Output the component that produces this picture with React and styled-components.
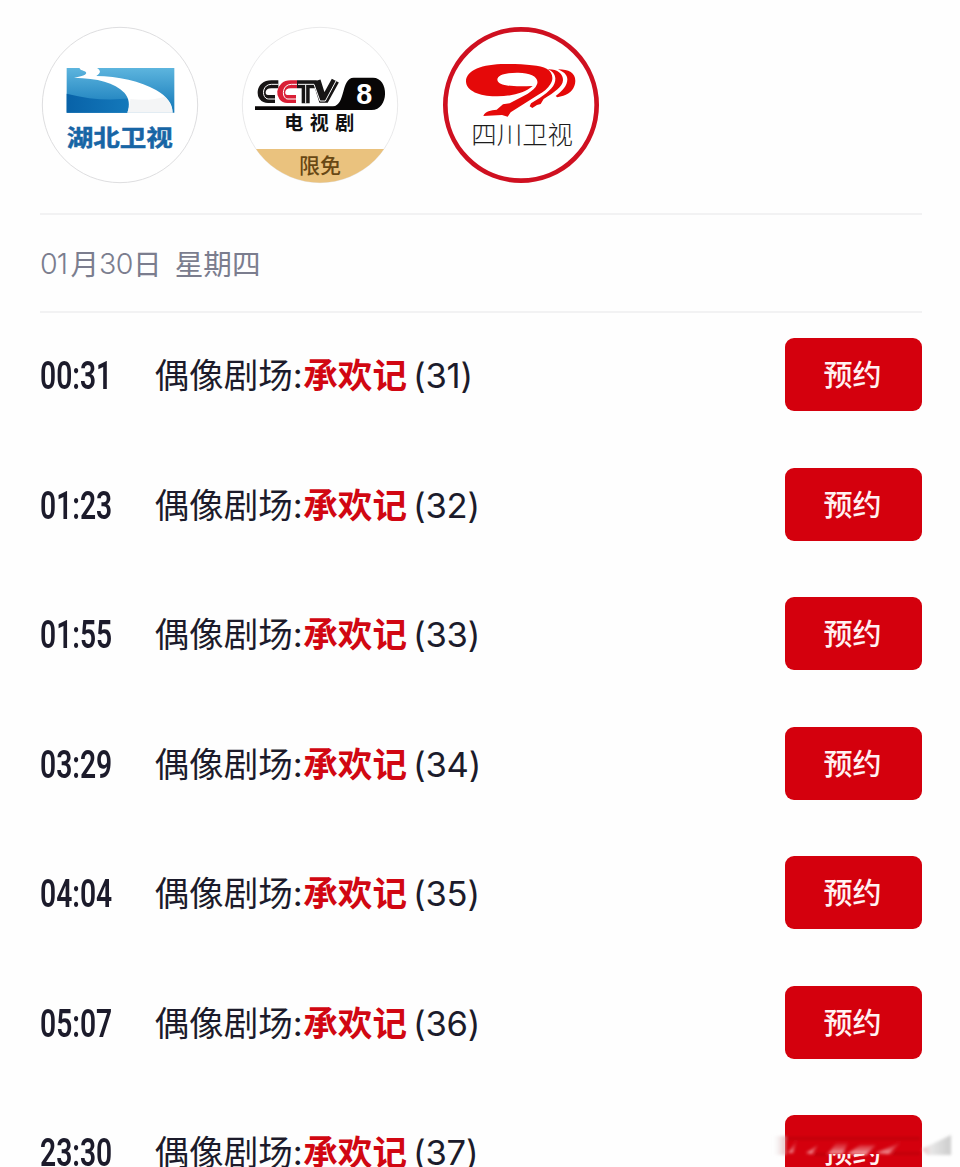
import React from "react";
import styled, { createGlobalStyle } from "styled-components";

const GlobalStyle = createGlobalStyle`
  body {
    margin: 0;
    background: #fefefe;
    font-family: Inter, "Noto Sans CJK SC", sans-serif;
    overflow: hidden;
  }
`;

const Page = styled.div`
  position: relative;
  height: 1167px;
  width: 960px;
  overflow: hidden;
  box-sizing: border-box;
  padding: 27px 38px 0 40px;
`;
const Channels = styled.div`
  display: flex;
  gap: 44.2px;
  height: 188px;
  padding-left: 2.2px;
  border-bottom: 2px solid #f2f2f3;
  box-sizing: border-box;
`;
const Channel = styled.svg`
  width: 156px;
  height: 156px;
  overflow: visible;
  cursor: pointer;
`;
const DateBar = styled.div`
  height: 98px;
  box-sizing: border-box;
  padding-bottom: 2px;
  border-bottom: 2px solid #f2f2f3;
  display: flex;
  align-items: center;
  font-family: "Noto Sans CJK SC", sans-serif;
  font-size: 28.6px;
  font-weight: 400;
  color: #7b7d8e;
  white-space: pre;
`;
const DateDigits = styled.span`
  display: inline-block;
  width: ${props => props.width};
  font-family: Inter, sans-serif;
  font-weight: 300;
  letter-spacing: -0.8px;
  padding-top: 2px;
`;
const Weekday = styled.span`
  margin-left: 13px;
`;
const Schedule = styled.div`
  padding-top: 25px;
`;
const Row = styled.div`
  display: flex;
  align-items: center;
  height: 73.5px;
  margin-bottom: 56px;
  color: #1c1b2b;
`;
const Time = styled.div`
  width: 114.5px;
  font-family: Roboto, sans-serif;
  font-size: 39.5px;
  font-weight: 600;
  line-height: 48px;
`;
const TimeText = styled.span`
  display: inline-block;
  transform: scaleX(0.715);
  transform-origin: left center;
  margin-top: 3px;
`;
const Title = styled.div`
  flex: 1;
  display: flex;
  font-size: 34.6px;
  line-height: 48px;
  padding-top: 1px;
  white-space: pre;
`;
const Show = styled.span`
  font-weight: 700;
  color: #d10712;
  margin-left: 0.5px;
`;
const Episode = styled.span`
  margin-left: 6px;
  letter-spacing: -0.2px;
`;
const Reserve = styled.button`
  width: 137px;
  height: 73px;
  border: none;
  border-radius: 9px;
  background: #d4000d;
  color: #fff2f2;
  font-family: "Noto Sans CJK SC", sans-serif;
  font-size: 29px;
  font-weight: 500;
  line-height: 40px;
  padding: 0 2px 3px 0;
  cursor: pointer;
`;
const Watermark = styled.svg`
  position: absolute;
  left: 770px;
  top: 1120px;
  width: 190px;
  height: 47px;
`;
const LogoText = styled.text`
  font-family: "Noto Sans CJK SC", sans-serif;
`;

const HubeiLogo = () => (
  <Channel viewBox="38 36 468 468">
    <defs>
      <linearGradient id="sky" x1="0" y1="0" x2="0" y2="1">
        <stop offset="0" stopColor="#5db5de" />
        <stop offset="1" stopColor="#1277b8" />
      </linearGradient>
      <linearGradient id="land" x1="0" y1="0" x2="1" y2="0">
        <stop offset="0" stopColor="#0862a8" />
        <stop offset="1" stopColor="#1479bb" />
      </linearGradient>
    </defs>
    <circle cx="272" cy="270" r="233" fill="#fff" stroke="#dedee0" strokeWidth="3" />
    <path d="M112 159H435V293H112Z" fill="url(#sky)" />
    <path d="M112 236C180 254 245 257 300 250V293H112Z" fill="url(#land)" />
    <path d="M151 159H203C217 168 213 175 201 183C265 184 335 199 380 225C414 245 430 266 430 293H294C302 270 300 250 285 233C256 202 205 190 134 188C167 183 178 176 166 169C159 165 151 165 151 159Z" fill="#fff" />
    <path d="M303 252C345 258 381 252 407 245C421 262 429 275 430 293H294Q302 272 303 252Z" fill="#f0f1f2" opacity=".7" />
    <LogoText x="112" y="394" fontSize="69" fontWeight="700" fill="#1765a5" stroke="#1765a5" strokeWidth="1.5" textLength="318" lengthAdjust="spacingAndGlyphs">湖北卫视</LogoText>
  </Channel>
);

const CctvLogo = () => (
  <Channel viewBox="38 36 468 468">
    <clipPath id="badge"><circle cx="272" cy="270" r="233" /></clipPath>
    <circle cx="272" cy="270" r="233" fill="#fff" stroke="#dedee0" strokeWidth="2" />
    <path d="M60 402H490V510H60Z" fill="#eac27e" clipPath="url(#badge)" />
    <g fill="none" strokeWidth="24">
      <path d="M147 208H126C89 208 89 252 116 252H137" stroke="#171515" />
      <path d="M203 208H184C148 208 148 252 174 252H200" stroke="#d91e35" />
      <path d="M203 208H262M229 208V265M262 197L279 251H288L318 197" stroke="#171515" />
    </g>
    <g fill="none" stroke="#fff" strokeWidth="3">
      <path d="M147 208H126C96 208 96 252 118 252H137" />
      <path d="M203 208H186C156 208 156 252 176 252H200" />
      <path d="M206 208H254L272 258H288L320 198M229 209V265" />
    </g>
    <path d="M77 274H311C350 270 334 189 373 188H431C480 188 480 285 427 285H77Z" fill="#080606" />
    <text x="381" y="267" fontFamily="Liberation Sans, sans-serif" fontSize="88" fontWeight="700" fill="#fff" textLength="48" lengthAdjust="spacingAndGlyphs">8</text>
    <LogoText x="165" y="344" fontSize="57" fontWeight="700" fill="#111" letterSpacing="19.5">电视剧</LogoText>
    <LogoText x="209" y="475" fontSize="63" fontWeight="500" fill="#684814">限免</LogoText>
  </Channel>
);

const SichuanLogo = () => (
  <Channel viewBox="38 36 468 468">
    <circle cx="272" cy="270" r="227" fill="#fff" stroke="#cf1020" strokeWidth="14" />
    <g fill="#e50909" transform="translate(90 129)">
      <path d="M17 70C17 37 65 18 135 18C195 18 239 22 259 32C276 42 281 61 271 77C263 91 250 101 234 110L151 163L142 176L125 171L69 174C75 158 92 157 109 155L128 139L148 136L201 108C216 98 226 91 230 79C238 57 210 43 170 44C136 44 111 52 111 65C113 81 145 88 217 84C193 105 151 116 105 115C58 115 17 99 17 70Z" />
      <path d="M262 34C291 33 309 48 308 67C307 87 282 103 250 123L241 138L230 141L216 150L208 145L212 136L239 119C268 100 286 83 285 61C284 48 276 39 262 34Z" />
      <path d="M293 34C326 34 345 45 345 69C344 91 331 107 309 113L291 118L286 114C307 99 321 83 321 64C321 50 309 41 293 34Z" />
    </g>
    <LogoText x="123" y="386" fontSize="75" fontWeight="300" fill="#1c1c1c" textLength="305" lengthAdjust="spacingAndGlyphs">四川卫视</LogoText>
  </Channel>
);

const programs = [
  { time: "00:31", episode: 31 },
  { time: "01:23", episode: 32 },
  { time: "01:55", episode: 33 },
  { time: "03:29", episode: 34 },
  { time: "04:04", episode: 35 },
  { time: "05:07", episode: 36 },
  { time: "23:30", episode: 37 }
];

const Program = ({ time, episode }) => (
  <Row>
    <Time><TimeText>{time}</TimeText></Time>
    <Title>
      <span>偶像剧场:</span>
      <Show>承欢记</Show>
      <Episode>({episode})</Episode>
    </Title>
    <Reserve>预约</Reserve>
  </Row>
);

// faded smear in the bottom corner
const Smear = () => (
  <Watermark viewBox="0 0 190 47">
    <defs>
      <filter id="soft" x="-20%" y="-50%" width="140%" height="200%"><feGaussianBlur stdDeviation="1.6" /></filter>
      <linearGradient id="edge" x1="0" y1="0" x2="1" y2="0">
        <stop offset="0" stopColor="#e8e8e8" stopOpacity="0" />
        <stop offset="1" stopColor="#d9a4a6" />
      </linearGradient>
      <linearGradient id="fade" x1="0" y1="0" x2="1" y2="0">
        <stop offset="0" stopColor="#e8b4b6" />
        <stop offset=".3" stopColor="#e3e3e3" />
        <stop offset="1" stopColor="#c4c4c4" />
      </linearGradient>
      <linearGradient id="shine" x1="0" y1="0" x2="0" y2="1">
        <stop offset="0" stopColor="#e0505a" stopOpacity=".2" />
        <stop offset="1" stopColor="#ffdcdc" />
      </linearGradient>
    </defs>
    <path d="M52 17H114V34H52Z" fill="#d4000d" />
    <g filter="url(#soft)">
      <path d="M3 16H16V35H3Z" fill="url(#edge)" opacity=".7" />
      <path d="M18 33L27 20L23 33ZM36 33L48 25L42 34Z" fill="url(#shine)" opacity=".75" />
      <path d="M58 34L66 23H78L73 34ZM77 34L90 25H106L96 35ZM106 33L131 22L119 34Z" fill="url(#shine)" opacity=".85" />
      <path d="M152 29L181 15V35H157Z" fill="url(#fade)" opacity=".85" />
      <path d="M16 17H150V20H16ZM44 33H56V36H44ZM122 32H150V35H122Z" fill="#86000a" opacity=".25" />
    </g>
  </Watermark>
);

const App = () => (
  <Page>
    <GlobalStyle />
    <Channels>
      <HubeiLogo />
      <CctvLogo />
      <SichuanLogo />
    </Channels>
    <DateBar>
      <DateDigits width="30.5px">01</DateDigits>月
      <DateDigits width="34px">30</DateDigits>日
      <Weekday>星期四</Weekday>
    </DateBar>
    <Schedule>
      {programs.map(program => <Program key={program.time} {...program} />)}
    </Schedule>
    <Smear />
  </Page>
);

export default App;
